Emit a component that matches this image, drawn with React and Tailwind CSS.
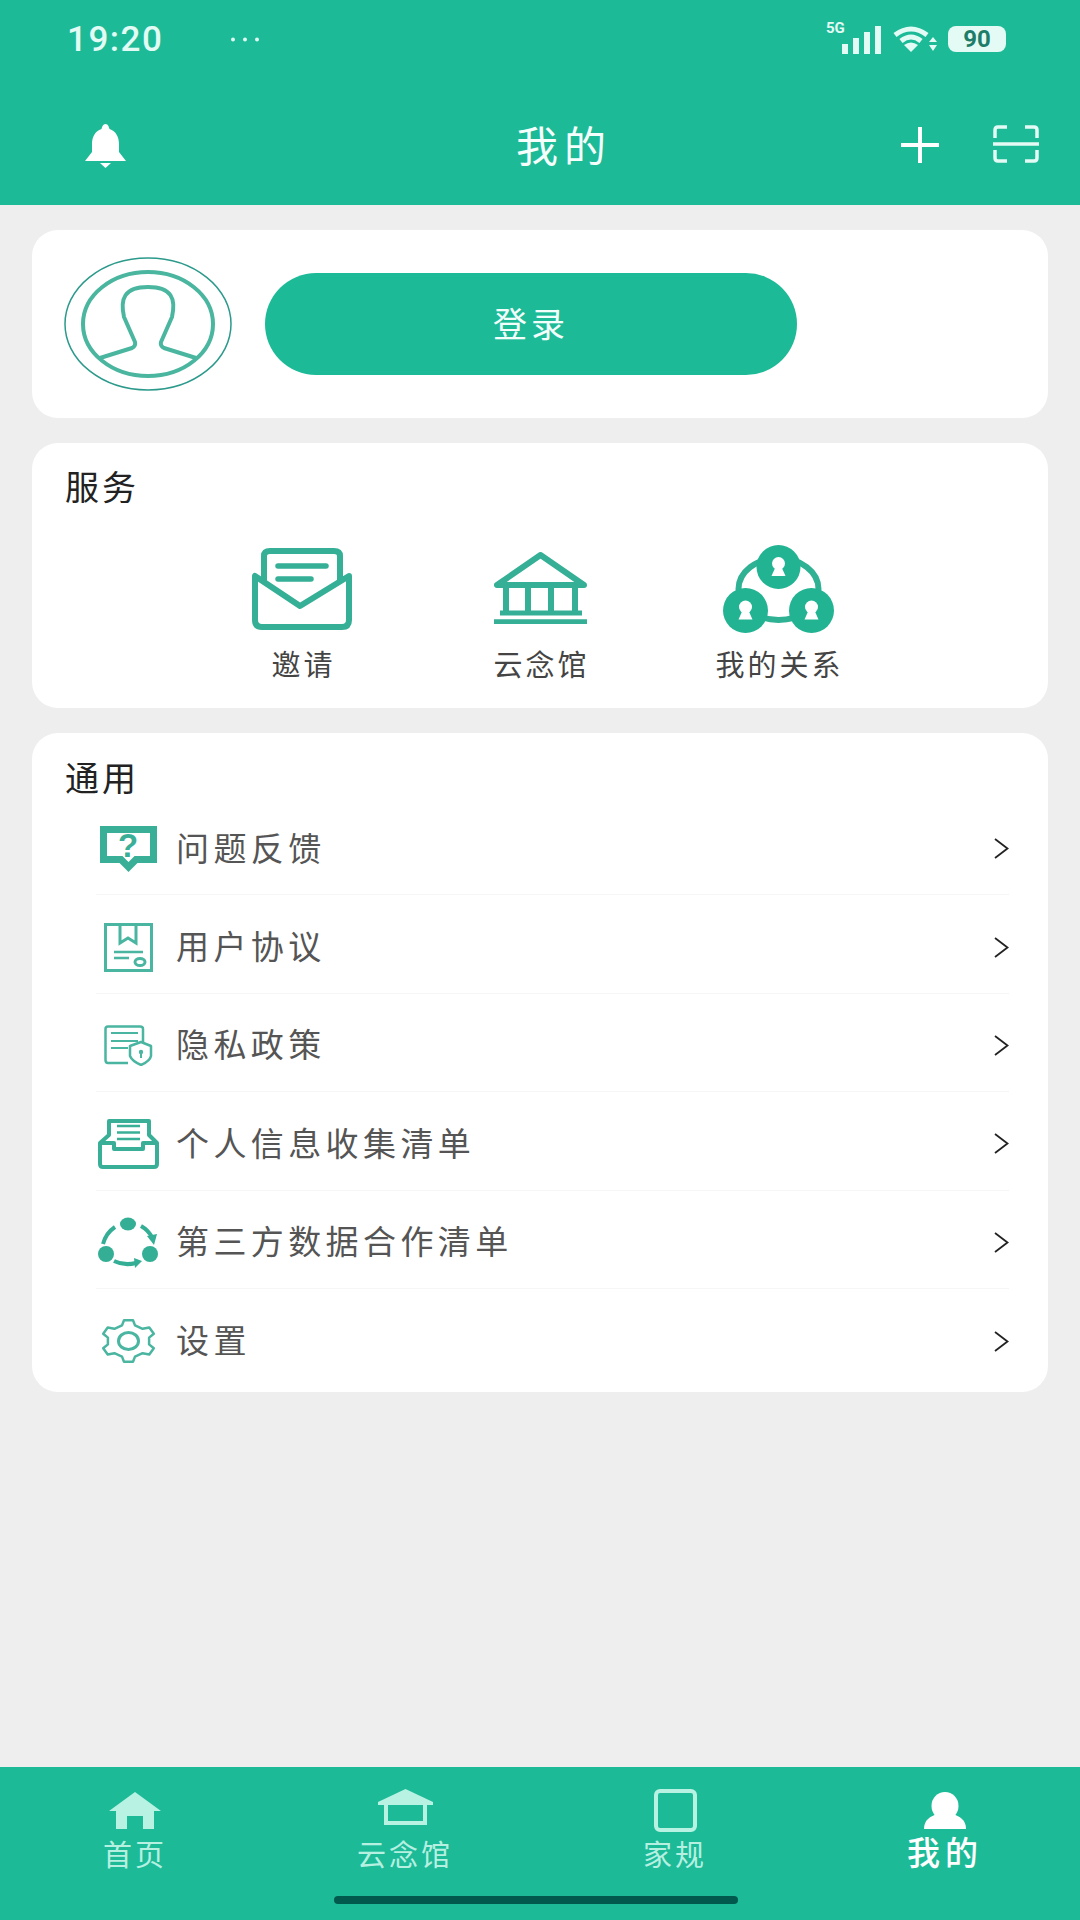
const G = "#35af96";
const CJK = { fontFamily: '"Noto Sans CJK SC", "Noto Sans", sans-serif' };

function gearPath(cx, cy, rx, ry, n) {
  const pts = [];
  for (let i = 0; i < n; i++) {
    const a = (i / n) * Math.PI * 2 - Math.PI / 2;
    const s = (Math.PI * 2) / n;
    [[-0.3, 0.78], [-0.16, 1], [0.16, 1], [0.3, 0.78]].forEach(([o, r]) => {
      const t = a + o * s;
      pts.push(`${(cx + Math.cos(t) * rx * r).toFixed(1)} ${(cy + Math.sin(t) * ry * r).toFixed(1)}`);
    });
  }
  return "M" + pts.join(" L") + " Z";
}

function Avatar() {
  return (
    <svg width="168" height="134" viewBox="0 0 168 134" fill="none">
      <ellipse cx="84" cy="67" rx="83" ry="66" stroke="#2b9a8b" strokeWidth="1.5" />
      <ellipse cx="84" cy="67" rx="65" ry="52" stroke="#4ab69f" strokeWidth="4" />
      <path d="M36 101 L68 91 Q72 89 71 85 L60 60 C56 42 60 30 84 30 C108 30 112 42 108 60 L97 85 Q96 89 100 91 L132 101" stroke="#4ab69f" strokeWidth="4" strokeLinejoin="round" />
    </svg>
  );
}

function Envelope() {
  return (
    <svg width="100" height="82" viewBox="0 0 100 82" fill="none" stroke={G} strokeWidth="6" strokeLinejoin="round" strokeLinecap="round" className="mt-[3px]">
      <path d="M12 32 V8 Q12 3 18 3 H82 Q88 3 88 8 V32" />
      <path d="M26 18 H74 M26 31 H59" strokeWidth="5.5" />
      <path d="M3 28 V72 Q3 79 10 79 H90 Q97 79 97 72 V28 L48 58 Z" />
    </svg>
  );
}

function Bank() {
  return (
    <svg width="93" height="72" viewBox="0 0 93 72" fill="none" stroke={G} strokeWidth="6" className="mt-[2px]">
      <path d="M46.5 3 L3 33 H90 Z" strokeLinejoin="round" />
      <path d="M12 33 V60 M34 33 V60 M57 33 V60 M81 33 V60" />
      <path d="M6 61 H88" strokeWidth="5" />
      <path d="M0 70 H93" strokeWidth="5.5" />
    </svg>
  );
}

function Person({ cx, cy }) {
  return (
    <g fill="#fff">
      <circle cx={cx} cy={cy - 3.5} r="6.5" />
      <path d={`M${cx - 3} ${cy} L${cx - 7} ${cy + 9} H${cx + 7} L${cx + 3} ${cy} Z`} />
    </g>
  );
}

function Relation() {
  return (
    <svg width="111" height="88" viewBox="0 0 111 88" fill="none" className="mt-[3px]">
      <ellipse cx="55.5" cy="44" rx="40" ry="31" stroke="#2fb194" strokeWidth="6" />
      <circle cx="55.5" cy="22" r="22" fill="#22b393" />
      <circle cx="22.5" cy="65.5" r="22.5" fill="#22b393" />
      <circle cx="88.5" cy="65.5" r="22.5" fill="#22b393" />
      <Person cx={55.5} cy={22} />
      <Person cx={22.5} cy={65.5} />
      <Person cx={88.5} cy={65.5} />
    </svg>
  );
}

function QIcon() {
  return (
    <div className="relative w-[57px] h-[46px]">
      <svg width="57" height="46" viewBox="0 0 57 46" fill="none">
        <path d="M3.5 3.5 H53.5 V33.5 H36 L28.5 41 L21 33.5 H3.5 Z" stroke="#3aaf97" strokeWidth="7" />
      </svg>
      <span className="absolute inset-x-0 top-[-1px] text-center text-[33px] leading-[42px] font-bold text-[#3aaf97]" style={{ fontFamily: '"Liberation Sans", sans-serif' }}>?</span>
    </div>
  );
}

function DocIcon() {
  return (
    <svg width="49" height="49" viewBox="0 0 49 49" fill="none" stroke="#4ab5a0" strokeWidth="3">
      <rect x="1.5" y="1.5" width="46" height="46" />
      <path d="M16 2 V20 L24 15 L32 20 V2" />
      <path d="M10 29 H39 M10 35 H25" strokeWidth="2.5" />
      <ellipse cx="36" cy="39" rx="5" ry="3.5" />
    </svg>
  );
}

function PrivacyIcon() {
  return (
    <svg width="49" height="41" viewBox="0 0 49 41" fill="none" stroke="#4ab5a0" strokeWidth="2.5" strokeLinejoin="round">
      <path d="M39 18 V4 Q39 1.5 36 1.5 H4 Q1.5 1.5 1.5 4 V35 Q1.5 38 4 38 H24" />
      <path d="M7 8 H34 M7 16 H34 M7 23 H24" strokeWidth="2" />
      <path d="M37 17 L47 21 V31 Q46 36 37 40 Q28 36 26 31 V21 Z" fill="#fff" />
      <circle cx="37" cy="27" r="2.2" fill="#4ab5a0" stroke="none" />
      <path d="M37 28 V33" strokeWidth="2" />
    </svg>
  );
}

function InboxIcon() {
  return (
    <svg width="63" height="51" viewBox="0 0 63 51" fill="none" stroke="#3aaf97" strokeWidth="4" strokeLinejoin="round">
      <path d="M3 25 L12 17 V3 H52 V17 L60 25 V46 Q60 49 57 49 H6 Q3 49 3 46 Z" />
      <path d="M3 25 H17 V31 H46 V25 H60" />
      <path d="M20 8 H43 M20 14.5 H43 M20 21 H43" strokeWidth="2.5" />
    </svg>
  );
}

function CycleIcon() {
  return (
    <svg width="61" height="51" viewBox="0 0 61 51" fill="none">
      <ellipse cx="30" cy="7" rx="8" ry="6.5" fill="#34ae95" />
      <circle cx="8" cy="37" r="8" fill="#34ae95" />
      <circle cx="52" cy="37" r="8" fill="#34ae95" />
      <path d="M5 27 Q8 16 17 10" stroke="#34ae95" strokeWidth="4" />
      <path d="M43 9 Q50 13 54 20" stroke="#34ae95" strokeWidth="4" />
      <path d="M49 19 L59 17 L56 28 Z" fill="#34ae95" />
      <path d="M16 44 Q26 49 38 46" stroke="#34ae95" strokeWidth="4" />
      <path d="M36 41 L44 44 L37 51 Z" fill="#34ae95" />
    </svg>
  );
}

function GearIcon() {
  return (
    <svg width="57" height="44" viewBox="0 0 57 44" fill="none" stroke="#4ab5a0" strokeWidth="2.5" strokeLinejoin="round">
      <path d={gearPath(28.5, 22, 27, 21, 6)} />
      <ellipse cx="28.5" cy="22" rx="10" ry="8.5" strokeWidth="3" />
    </svg>
  );
}

function Chevron() {
  return (
    <svg width="15" height="21" viewBox="0 0 15 21" fill="none" stroke="#222" strokeWidth="1.8">
      <path d="M1 1 L13.5 10.5 L1 20" />
    </svg>
  );
}

function Row({ icon, label, last }) {
  return (
    <div className={`flex items-center h-[98.4px] ml-[64px] mr-[39px] ${last ? "" : "border-b border-[#f6f6f6]"} pt-[6px]`}>
      <div className="w-[64px] flex justify-center shrink-0">{icon}</div>
      <span className="ml-[16px] pb-[3px] flex-1 text-[33px] tracking-[4.4px] text-[#555] leading-none">{label}</span>
      <Chevron />
    </div>
  );
}

function Service({ icon, label, cls }) {
  return (
    <div className={`flex flex-col items-center w-[130px] ${cls}`}>
      <div className="h-[90px] flex items-center">{icon}</div>
      <span className="mt-[16px] ml-[3px] text-[29px] leading-[30px] tracking-[3px] text-[#444] whitespace-nowrap">{label}</span>
    </div>
  );
}

function Tab({ icon, label, active }) {
  return (
    <div className="flex flex-col items-center">
      <div className="h-[47px] flex items-center">{icon}</div>
      <span className={active ? "text-[33px] leading-[34px] font-medium tracking-[5px] text-white" : "mt-[3px] text-[29px] leading-[32px] tracking-[3px] text-[#b6f0e1]"}>{label}</span>
    </div>
  );
}

export default function App() {
  return (
    <div className="w-[1080px] h-[1920px] flex flex-col bg-[#eeeeee] overflow-hidden" style={CJK}>
      <header className="h-[205px] bg-[#1dba98] shrink-0">
        <div className="flex items-center pt-[24px] pl-[67px] pr-[74px] h-[54px]">
          <span className="text-[35px] leading-none font-medium tracking-[1.5px] text-[#e2fbf4]" style={{ fontFamily: "Roboto, sans-serif" }}>19:20</span>
          <svg width="30" height="5" viewBox="0 0 30 5" className="ml-[67px]" fill="#dff9f2">
            <circle cx="3" cy="2.5" r="2" /><circle cx="15" cy="2.5" r="2" /><circle cx="27" cy="2.5" r="2" />
          </svg>
          <div className="ml-auto flex items-center">
            <div className="relative">
              <span className="absolute left-[-2px] top-[-4px] text-[15px] leading-[18px] font-bold text-[#e2fbf4]" style={{ fontFamily: "Roboto, sans-serif" }}>5G</span>
              <svg width="56" height="32" viewBox="0 0 56 32" fill="#e2fbf4" className="block">
                <rect x="14" y="21" width="6" height="10" />
                <rect x="25" y="15" width="6" height="16" />
                <rect x="36" y="9" width="6" height="22" />
                <rect x="47" y="3" width="6" height="28" />
              </svg>
            </div>
            <svg width="46" height="26" viewBox="0 0 46 26" fill="none" stroke="#e2fbf4" strokeWidth="5" className="ml-[9px]">
              <path d="M2 9 Q18 -3 34 9" />
              <path d="M8 15 Q18 7 28 15" />
              <path d="M18 26 L11 19 Q18 14 25 19 Z" fill="#e2fbf4" stroke="none" />
              <path d="M40 11 L44 16 H36 Z M40 25 L44 19 H36 Z" fill="#e2fbf4" stroke="none" />
            </svg>
            <div className="ml-[9px] w-[58px] h-[26px] rounded-[8px] bg-[#e4fbf5] flex items-center justify-center text-[24px] font-bold leading-none text-[#1e7d68]" style={{ fontFamily: "Roboto, sans-serif" }}>90</div>
          </div>
        </div>
        <div className="flex items-center mt-[68px] pl-[84px] pr-[41px] h-[44px]">
          <svg width="43" height="44" viewBox="0 0 43 44" fill="#fff" className="mt-[3px]">
            <path d="M21.5 0 C24 0 25 3 25.5 5 C32 7 35 13 35 20 V28 L42 37 H1 L8 28 V20 C8 13 11 7 17.5 5 C18 3 19 0 21.5 0 Z" />
            <path d="M16 39 H27 L21.5 44 Z" />
          </svg>
          <span className="ml-[389px] text-[42px] leading-none tracking-[6px] text-[#f5fffc]">我的</span>
          <svg width="38" height="36" viewBox="0 0 38 36" stroke="#fff" strokeWidth="4" className="ml-auto mt-[2px]">
            <path d="M0 18 H38 M19 0 V36" />
          </svg>
          <svg width="46" height="38" viewBox="0 0 46 38" fill="none" stroke="#e4fbf5" strokeWidth="3.5" className="ml-[54px]">
            <path d="M2 13 V5 Q2 2 5 2 H14 M32 2 H41 Q44 2 44 5 V13 M2 25 V33 Q2 36 5 36 H14 M32 36 H41 Q44 36 44 33 V25" />
            <path d="M0 19 H46" />
          </svg>
        </div>
      </header>

      <main className="flex-1 flex flex-col gap-[25px] px-[32px] pt-[25px]">
        <section className="h-[188px] bg-white rounded-[26px] flex items-center pl-[32px]">
          <Avatar />
          <button className="ml-[33px] w-[532px] h-[102px] pb-[4px] rounded-full bg-[#1dba98] text-[#f2fffb] text-[34px] tracking-[4px] flex items-center justify-center">登录</button>
        </section>

        <section className="h-[265px] bg-white rounded-[26px] pl-[33px] pt-[22px]">
          <h2 className="text-[34px] leading-[42px] tracking-[3px] text-[#222] font-normal">服务</h2>
          <div className="flex mt-[35px] items-start">
            <Service icon={<Envelope />} label="邀请" cls="ml-[172px]" />
            <Service icon={<Bank />} label="云念馆" cls="ml-[108px]" />
            <Service icon={<Relation />} label="我的关系" cls="ml-[108px]" />
          </div>
        </section>

        <section className="h-[659px] bg-white rounded-[26px] pt-[23px]">
          <h2 className="pl-[33px] text-[34px] leading-[41px] tracking-[3px] text-[#222] font-normal">通用</h2>
          <Row icon={<QIcon />} label="问题反馈" />
          <Row icon={<DocIcon />} label="用户协议" />
          <Row icon={<PrivacyIcon />} label="隐私政策" />
          <Row icon={<InboxIcon />} label="个人信息收集清单" />
          <Row icon={<CycleIcon />} label="第三方数据合作清单" />
          <Row icon={<GearIcon />} label="设置" last />
        </section>
      </main>

      <footer className="relative h-[153px] bg-[#1dba98] shrink-0 grid grid-cols-4 pt-[20px] content-start">
        <Tab label="首页" icon={
          <svg width="52" height="37" viewBox="0 0 52 37" fill="#b8f2e3">
            <path d="M26 0 L52 19 H45 V37 H34 V24 H18 V37 H7 V19 H0 Z" />
          </svg>} />
        <Tab label="云念馆" icon={
          <svg width="55" height="44" viewBox="0 0 55 44" fill="none">
            <path d="M27.5 0 L55 13 V16 H0 V13 Z" fill="#b8f2e3" />
            <rect x="8" y="14" width="39" height="20" stroke="#b8f2e3" strokeWidth="4" />
          </svg>} />
        <Tab label="家规" icon={
          <svg width="43" height="43" viewBox="0 0 43 43" fill="none">
            <rect x="2" y="2" width="39" height="39" rx="4" stroke="#b8f2e3" strokeWidth="4" />
          </svg>} />
        <Tab active label="我的" icon={
          <svg width="42" height="37" viewBox="0 0 42 37" fill="#fff">
            <ellipse cx="21" cy="14" rx="13.5" ry="14" />
            <path d="M0 37 C0 28 6 24 14 22 H28 C36 24 42 28 42 37 Z" />
          </svg>} />
        <div className="absolute left-[334px] bottom-[16px] w-[404px] h-[8px] rounded-full bg-[#00594c]" />
      </footer>
    </div>
  );
}
